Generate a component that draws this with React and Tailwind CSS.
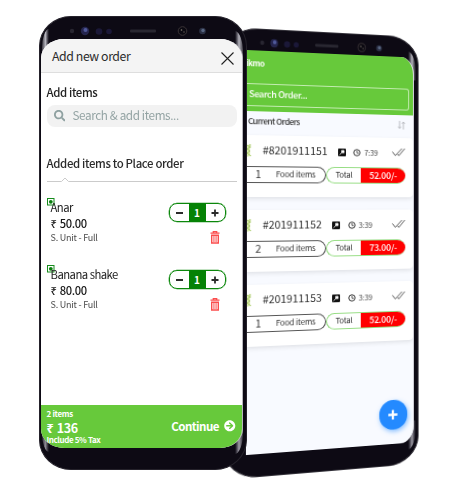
import React from "react";
import { FaSearch, FaArrowCircleRight } from "react-icons/fa";

const items = [
  { name: "Anar", price: "50.00", qty: 1 },
  { name: "Banana shake", price: "80.00", qty: 1 },
];

const orders = [
  { id: "#8201911151", time: "7:39", count: 1, total: "52.00/-" },
  { id: "#201911152", time: "3:39", count: 2, total: "73.00/-" },
  { id: "#201911153", time: "3:39", count: 1, total: "52.00/-" },
];

function Sensors() {
  return (
    <svg width="144" height="14" viewBox="0 0 144 14" className="block">
      <circle cx="4" cy="7" r="2.2" fill="#282631" />
      <circle cx="17" cy="7" r="4.2" fill="#25254d" />
      <circle cx="17.5" cy="6" r="2" fill="#50599a" />
      <circle cx="31" cy="7.500" r="3.300" fill="#1b1838" />
      <circle cx="41" cy="7.500" r="2.800" fill="#1b1838" />
      <rect x="62" y="5.500" width="26" height="3" rx="1" fill="#292731" />
      <circle cx="114.500" cy="7" r="4.300" fill="#0b0911" stroke="#393336" strokeWidth="1" />
      <circle cx="113.500" cy="6" r="0.800" fill="#8b8277" />
      <circle cx="116" cy="8" r="0.700" fill="#6b655e" />
      <circle cx="134.500" cy="7" r="3.300" fill="#2b3044" />
      <circle cx="135" cy="6.500" r="1.700" fill="#596783" />
    </svg>
  );
}

function TrashIcon() {
  return (
    <svg width="10" height="13" viewBox="0 0 10 13" className="block">
      <path d="M0.500 2.200H9.500M3.300 2V0.700H6.700V2" fill="none" stroke="#fb4d4d" strokeWidth="1.300" />
      <path d="M1.700 4.300H8.300V12H1.700Z" fill="none" stroke="#fb4d4d" strokeWidth="1.400" />
      <path d="M3.700 5V11M5 5V11M6.300 5V11" stroke="#fb4d4d" strokeWidth="0.700" />
    </svg>
  );
}

function Item({ name, price, qty }) {
  return (
    <div className="relative flex h-[67.300px] justify-between pl-[4px] pr-[11.500px]">
      <svg width="8" height="8" viewBox="0 0 8 8" className="absolute left-0 -top-[2px]">
        <rect x="0.500" y="0.500" width="6.500" height="6.500" fill="#fff" stroke="#168c1c" />
        <circle cx="3.800" cy="3.800" r="1.900" fill="#087f0c" />
      </svg>
      <div className="relative flex flex-col">
        <div className="h-[15.500px] text-[11.300px] leading-[15px] tracking-[-0.520px] text-[#222]">{name}</div>
        <div className="h-[15.500px] text-[11.200px] font-medium leading-[16px] tracking-[-0.350px] text-[#151515] [word-spacing:1px]">₹ {price}</div>
        <div className="h-[14px] text-[9px] leading-[14px] tracking-[-0.220px] text-[#4c4c4c]">S. Unit - Full</div>
      </div>
      <div className="flex flex-col items-end pt-[3.500px]">
        <div className="flex h-[19px] w-[57px] items-stretch rounded-[8px] border border-[#0b870b] shadow-[0_0_0_0.300px_#0b870b]">
          <div className="flex flex-1 items-center justify-center">
            <div className="h-[2px] w-[7px] bg-[#2b2b2b]" />
          </div>
          <div className="-my-px flex w-[17px] items-center justify-center bg-[#058205] text-[10px] font-bold text-white">{qty}</div>
          <div className="flex flex-1 items-center justify-center">
            <svg width="8" height="8" viewBox="0 0 8 8"><path d="M4 0.500V7.500M0.500 4H7.500" stroke="#2b2b2b" strokeWidth="1.800" /></svg>
          </div>
        </div>
        <div className="pr-[6px] pt-[9px]"><TrashIcon /></div>
      </div>
    </div>
  );
}

function Order({ id, time, count, total }) {
  return (
    <div className="flex h-[62.500px] flex-col rounded-r-[4px] bg-white shadow-[0_2px_4px_#00000018]">
      <div className="flex h-[31px] items-center pr-[8px] pt-[1px]">
        <svg width="6" height="15" viewBox="0 0 6 15">
          <path d="M0 3L4 1V13L0 14Z" fill="#dcebb0" />
          <path d="M1 2L4 4L1 6L4 8L1 10L5 13M4 1V5" fill="none" stroke="#a9cb6a" strokeWidth="0.900" />
        </svg>
        <div className="-mt-[2px] ml-[10px] whitespace-nowrap text-[10.400px] leading-[14px] text-[#2c2c2c]">{id}</div>
        <svg width="8" height="8" viewBox="0 0 8 8" className="ml-[10.500px]">
          <rect width="8" height="8" rx="1" fill="#111" />
          <path d="M1.500 6.500L4 4M3.500 2H6V4.500L5 3.800L4 4.500Z" fill="#fff" stroke="#fff" strokeWidth="0.800" />
        </svg>
        <svg width="8" height="8" viewBox="0 0 8 8" className="ml-[7.500px] mt-[1px]">
          <circle cx="4" cy="4" r="3.200" fill="none" stroke="#333" strokeWidth="1" />
          <path d="M4 2V4.300H5.800" fill="none" stroke="#333" strokeWidth="0.800" />
        </svg>
        <div className="ml-[3px] mt-[1px] text-[7.500px] leading-[10px] tracking-[-0.100px] text-[#444]">{time}</div>
        <svg width="14" height="10" viewBox="0 0 14 10" className="-mt-[1px] ml-auto">
          <path d="M0.500 4.500L3.500 8.500L10.500 1M6 7L7.200 8.500L13.500 1" fill="none" stroke="#444" strokeWidth="0.900" />
        </svg>
      </div>
      <div className="flex h-[17.500px] text-[7.900px] tracking-[-0.200px] text-[#333]">
        <div className="flex w-[78px] items-center rounded-r-[9px] border border-l-0 border-[#555]">
          <span className="-mt-[1px] ml-[9px] text-[10px] leading-[14px]">{count}</span>
          <span className="ml-auto mr-[9.500px] whitespace-nowrap">Food items</span>
        </div>
        <div className="flex w-[81px] overflow-hidden rounded-[9px] border border-r-0 border-[#96dd83]">
          <span className="flex w-[34px] items-center justify-center">Total</span>
          <span className="-my-px flex flex-1 items-center justify-center bg-[#ff0000] text-[9px] font-medium text-white">{total}</span>
        </div>
      </div>
    </div>
  );
}

function OrdersPhone() {
  return (
    <div className="absolute left-[247px] top-[50px] origin-top-left [transform:matrix3d(1.0519,0.0478,0,0.000315,0,1,0,0,0,0,1,0,0,0,0,1)]">
      <div className="absolute -left-[22px] -top-[22px] h-[450px] w-[194px] rounded-[32px/30px] border border-[#333139] bg-[#0d0a14]">
        <div className="absolute right-[2px] top-[15px] h-[30px] w-[8px] rounded-tr-[8px_22px] bg-linear-to-r from-[#0d0a14] via-[#b5b4bd] to-[#1c1922]" />
        <div className="absolute bottom-[15px] right-[2px] h-[30px] w-[8px] rounded-br-[8px_22px] bg-linear-to-r from-[#0d0a14] via-[#9a98a2] to-[#0d0a14]" />
        <div className="absolute left-[31.500px] top-[6px] origin-left scale-x-[0.890]"><Sensors /></div>
      </div>
      <div className="absolute -left-[1px] top-0 flex h-[405px] w-[167.500px] flex-col overflow-hidden rounded-r-[14px_18px] border-r border-[#dfe0e6] bg-[#f8faff]">
        <div className="flex h-[60.500px] shrink-0 flex-col bg-[#67c93b] text-white">
          <div className="h-[33px] pt-[6px] text-[7.700px] font-bold leading-[14px] tracking-[-0.350px]">ikmo</div>
          <div className="flex h-[22.500px] w-[163px] items-center rounded-r-[3px] border border-l-0 border-[#c4ecb2] pb-[1px] pl-[3px] text-[8.700px] font-medium tracking-[-0.350px]">Search Order...</div>
        </div>
        <div className="flex h-[24px] shrink-0 items-center justify-between pl-[2px] pr-[8px]">
          <span className="-mt-[3px] text-[8px] font-medium tracking-[-0.500px] text-[#333]">Current Orders</span>
          <svg width="8" height="9" viewBox="0 0 8 9" className="-mt-[3px]">
            <path d="M2 0V8M0.500 6L2 8L3.500 6M6 9V1M4.500 3L6 1L7.500 3" fill="none" stroke="#b9bbc0" strokeWidth="1" />
          </svg>
        </div>
        <div className="flex flex-col gap-[12.500px]">
          {orders.map((o) => <Order key={o.id} {...o} />)}
        </div>
        <div className="absolute left-[131.500px] top-[359px] flex h-[31px] w-[29px] items-center justify-center rounded-full bg-[#248aff] shadow-[1px_2px_5px_#248aff88]">
          <svg width="10" height="11" viewBox="0 0 10 11"><path d="M5 0.500V10.500M0.300 5.500H9.700" stroke="#fff" strokeWidth="2.300" /></svg>
        </div>
      </div>
    </div>
  );
}

function AddOrderPhone() {
  return (
    <div className="absolute left-[39px] top-[16px] h-[454px] w-[208px] rounded-[32px/30px] border border-[#25222b] bg-[#0d0a14]">
      <div className="absolute left-[2px] top-[12px] h-[30px] w-[7px] rounded-tl-[8px_22px] bg-linear-to-r from-[#45434c] via-[#b5b4bd] to-[#0d0a14]" />
      <div className="absolute right-[3px] top-[14px] h-[30px] w-[8px] rounded-tr-[8px_22px] bg-linear-to-r from-[#0d0a14] via-[#b5b4bd] to-[#45434c]" />
      <div className="absolute bottom-[17px] left-[2px] h-[26px] w-[7px] rounded-bl-[8px_22px] bg-linear-to-r from-[#35333c] via-[#8a8892] to-[#0d0a14]" />
      <div className="absolute bottom-[15px] right-[3px] h-[28px] w-[8px] rounded-br-[8px_22px] bg-linear-to-r from-[#0d0a14] via-[#a09ea8] to-[#35333c]" />
      <div className="absolute left-[28px] top-[7px]"><Sensors /></div>
      <div className="absolute left-[1px] top-[22px] flex h-[409px] w-[202px] flex-col overflow-hidden rounded-[23px/19px] border-r border-[#b8b7bd] bg-white">
        <div className="flex h-[34px] shrink-0 items-center justify-between border-b border-[#dedede] bg-[#f4f4f4] pl-[11px] pr-[8px]">
          <span className="text-[12.300px] leading-[18px] tracking-[-0.420px] text-[#2b2b2b]">Add new order</span>
          <svg width="13" height="13" viewBox="0 0 13 13" className="mt-[5px]"><path d="M0.500 0.500L12.500 12.500M12.500 0.500L0.500 12.500" stroke="#222" strokeWidth="1.100" /></svg>
        </div>
        <div className="flex flex-1 flex-col pl-[5.500px] pr-[5px]">
          <div className="mt-[11px] h-[16px] text-[11.400px] font-medium leading-[16px] tracking-[-0.380px] text-[#222]">Add items</div>
          <div className="mt-[5px] flex h-[21.500px] items-center gap-[7.500px] rounded-[8px] bg-[#f2f2f2] pl-[7px]">
            <FaSearch size={11.500} color="#8fa1a1" />
            <span className="-mt-[1px] text-[11.700px] leading-[16px] tracking-[-0.370px] text-[#93a3a3]">Search &amp; add items...</span>
          </div>
          <div className="mt-[28px] h-[16px] text-[11.400px] font-medium leading-[16px] tracking-[-0.350px] text-[#2b2b2b]">Added items to Place order</div>
          <svg width="190" height="6" viewBox="0 0 190 6" className="mt-[6px] shrink-0"><path d="M0 4.500H14.500L18 1L21.500 4.500H190" fill="none" stroke="#cbcbcb" /></svg>
          <div className="mt-[17px] flex flex-col">
            {items.map((i) => <Item key={i.name} {...i} />)}
          </div>
        </div>
        <div className="flex h-[43px] shrink-0 items-center justify-between bg-[#67c93b] pl-[5.500px] pr-[6.500px] font-bold text-white">
          <div className="flex flex-col">
            <span className="h-[12px] text-[8px] leading-[12px] tracking-[-0.300px]">2 items</span>
            <span className="h-[15px] text-[12.500px] leading-[15px] tracking-[-0.350px] [word-spacing:1px]">₹ 136</span>
            <span className="h-[11px] text-[8px] leading-[10px] tracking-[-0.370px]">Include 5% Tax</span>
          </div>
          <div className="-mt-[1px] flex items-center gap-[5px]">
            <span className="text-[11.600px] leading-[16px] tracking-[-0.550px]">Continue</span>
            <FaArrowCircleRight size={11.500} />
          </div>
        </div>
      </div>
    </div>
  );
}

export default function App() {
  return (
    <div className="relative h-[483px] w-[464px] overflow-hidden bg-white font-['Noto_Sans_CJK_SC','Noto_Sans',sans-serif]">
      <OrdersPhone />
      <AddOrderPhone />
    </div>
  );
}
